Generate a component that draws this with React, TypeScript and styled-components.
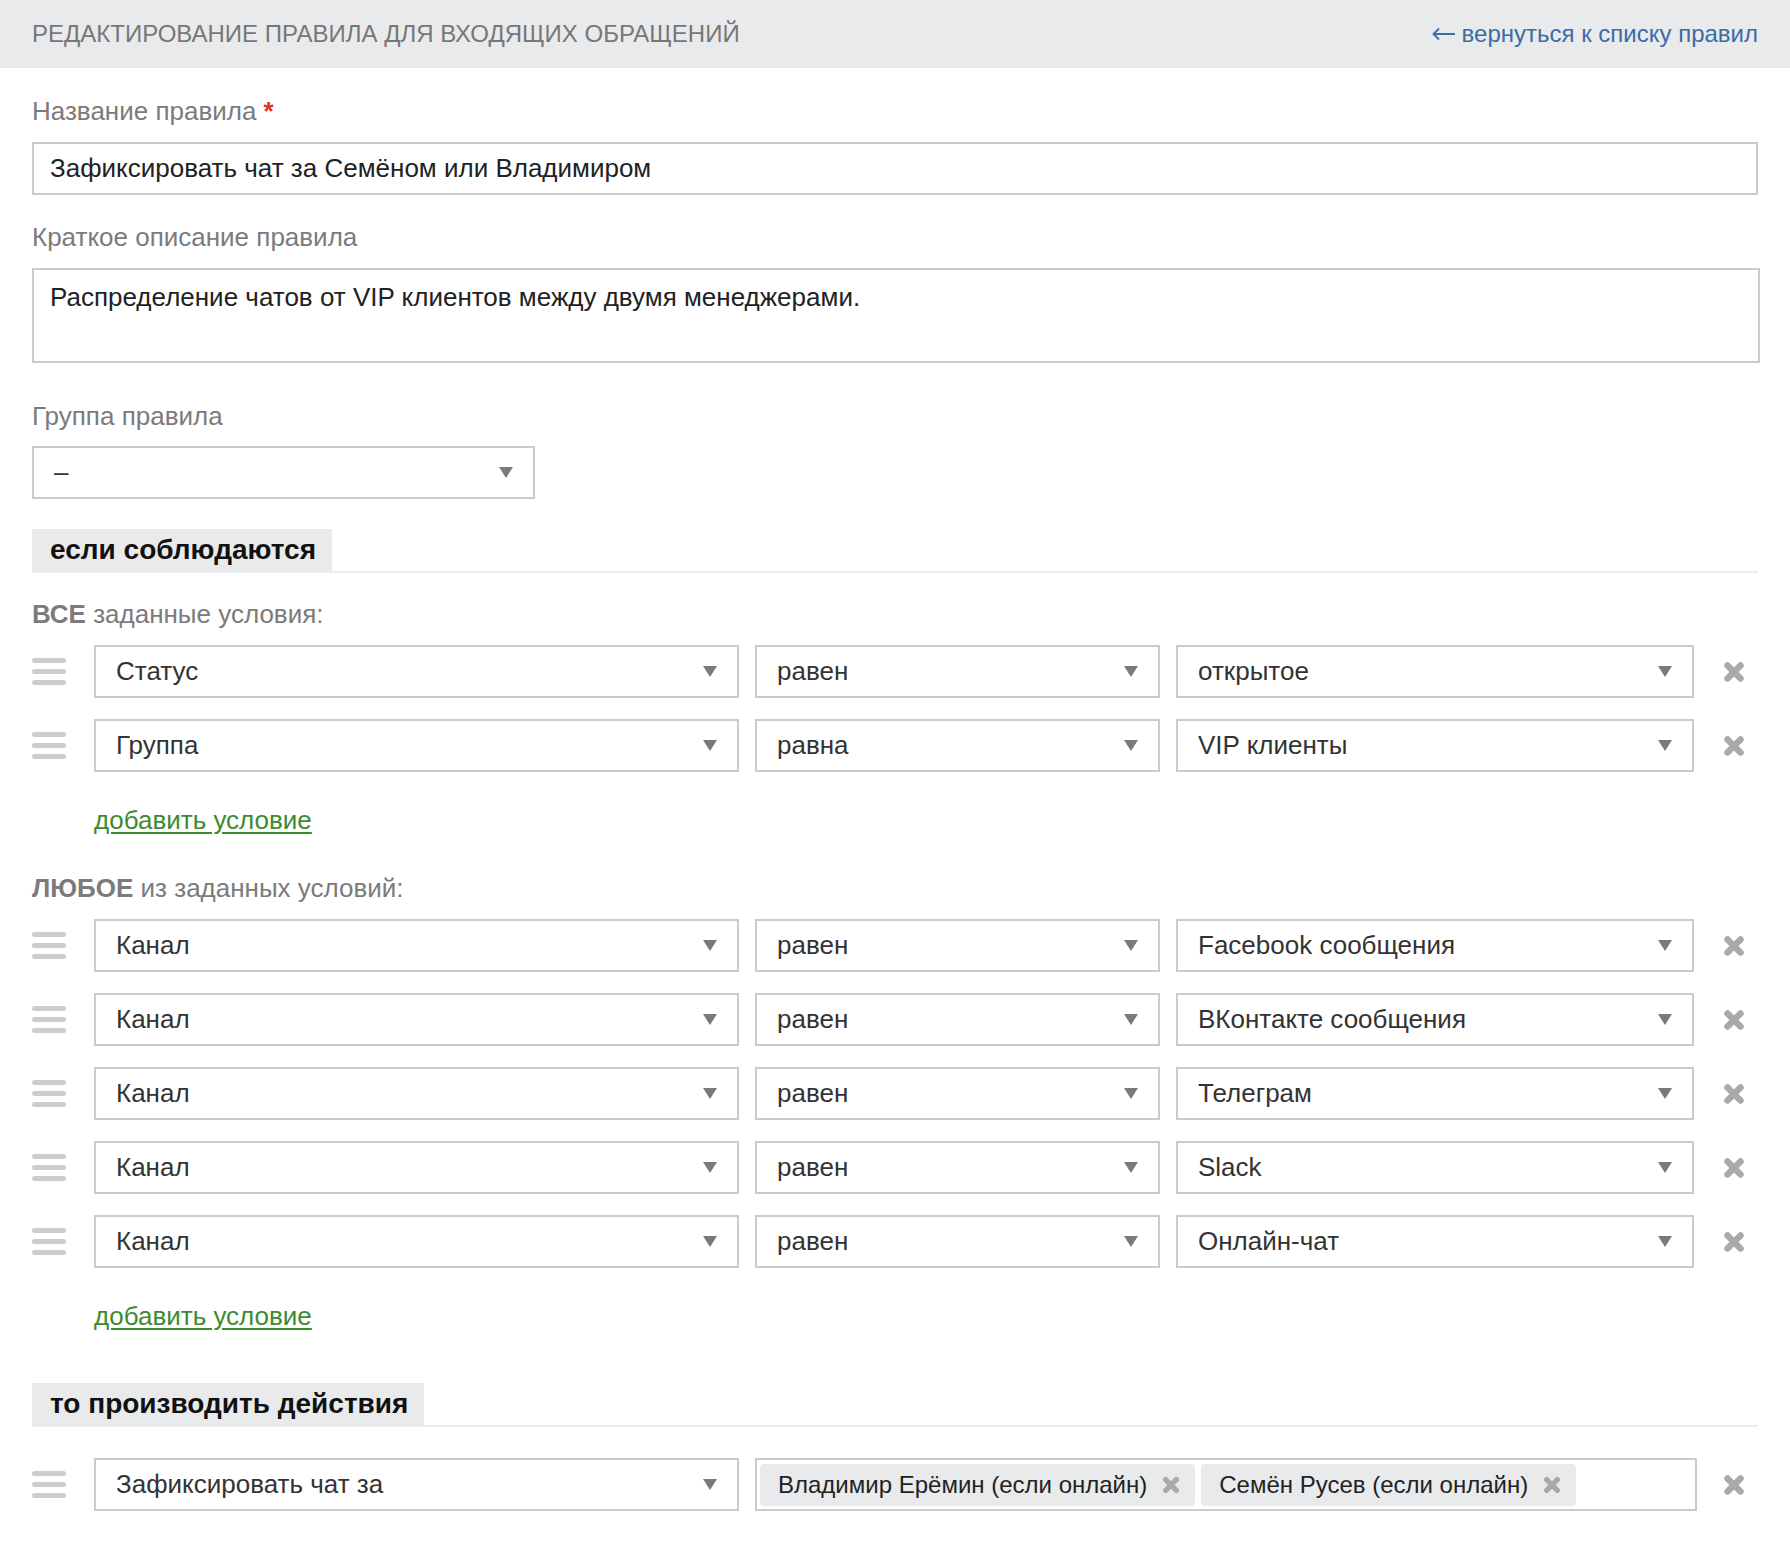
/***** IMPORTS *****/
import React from 'react';
import styled, { createGlobalStyle } from 'styled-components';


/***** STYLES *****/
const GlobalStyle = createGlobalStyle`
    html, body {
        margin: 0;
        padding: 0;
        background: #fff;
    }

    body {
        font-family: "Liberation Sans", Arial, Helvetica, sans-serif;
        color: #222;
    }
`;

const Header = styled.header`
    height: 68px;
    padding: 0 32px;
    background: #e9eaec;
    display: flex;
    align-items: center;
    justify-content: space-between;
`;

const HeaderTitle = styled.h1`
    margin: 0;
    font-size: 24px;
    font-weight: normal;
    color: #777;
    text-transform: uppercase;
`;

const BackLink = styled.a`
    display: flex;
    align-items: center;
    gap: 6px;
    font-size: 24px;
    color: #3b6ca5;
    text-decoration: none;
`;

const Page = styled.main`
    padding: 0 32px 35px;
    display: flex;
    flex-direction: column;
`;

const Label = styled.div<{ $top: number }>`
    margin-top: ${p => p.$top}px;
    margin-bottom: 16px;
    font-size: 26px;
    line-height: 30px;
    color: #7b7b7b;

    b {
        font-weight: bold;
    }
`;

const Required = styled.span`
    color: #e2321f;
    font-weight: bold;
`;

const TextInput = styled.input`
    box-sizing: border-box;
    width: 100%;
    height: 53px;
    padding: 0 16px;
    border: 2px solid #cbcbcb;
    font-family: inherit;
    font-size: 26px;
    color: #222;
    outline: none;
`;

const TextArea = styled.textarea`
    box-sizing: border-box;
    width: calc(100% + 2px);
    height: 95px;
    padding: 12px 16px;
    border: 2px solid #cbcbcb;
    font-family: inherit;
    font-size: 26px;
    line-height: 30px;
    color: #222;
    resize: none;
    outline: none;
`;

const Select = styled.div<{ $width?: number }>`
    box-sizing: border-box;
    width: ${p => (p.$width ? `${p.$width}px` : 'auto')};
    height: 53px;
    padding: 0 20px 0 20px;
    border: 2px solid #cbcbcb;
    background: #fff;
    display: flex;
    align-items: center;
    justify-content: space-between;
    font-size: 26px;
    color: #333;
    min-width: 0;
`;

const Arrow = styled.span`
    width: 0;
    height: 0;
    border-left: 7px solid transparent;
    border-right: 7px solid transparent;
    border-top: 11px solid #7a7a7a;
    flex-shrink: 0;
`;

const SectionHead = styled.div<{ $top: number }>`
    margin-top: ${p => p.$top}px;
    display: flex;
    border-bottom: 2px solid #ececee;
`;

const SectionTab = styled.div`
    height: 42px;
    padding: 0 16px 0 18px;
    background: #e9eaec;
    display: flex;
    align-items: center;
    font-size: 28px;
    font-weight: bold;
    color: #111;
`;

const Rows = styled.div`
    display: flex;
    flex-direction: column;
    gap: 21px;
`;

const Row = styled.div<{ $top?: number }>`
    margin-top: ${p => p.$top || 0}px;
    display: grid;
    grid-template-columns: 46px 645px 405px 518px 1fr;
    column-gap: 16px;
    align-items: center;
`;

const Handle = styled.div`
    width: 34px;
    display: flex;
    flex-direction: column;
    gap: 6px;

    span {
        display: block;
        height: 5px;
        border-radius: 3px;
        background: #cdcdcd;
    }
`;

const Remove = styled.div`
    display: flex;
    justify-content: center;
`;

const AddLink = styled.a<{ $top: number }>`
    align-self: flex-start;
    margin-top: ${p => p.$top}px;
    margin-left: 62px;
    font-size: 26px;
    line-height: 30px;
    color: #3d8b31;
    text-decoration: underline;
    text-underline-offset: 3px;
`;

const TagBox = styled.div`
    grid-column: span 2;
    box-sizing: border-box;
    width: calc(100% + 3px);
    height: 53px;
    padding: 0 3px;
    border: 2px solid #cbcbcb;
    display: flex;
    align-items: center;
    gap: 6px;
`;

const Tag = styled.div`
    height: 42px;
    padding: 0 15px 0 18px;
    border-radius: 4px;
    background: #e9eaec;
    display: flex;
    align-items: center;
    gap: 15px;
    font-size: 24px;
    color: #222;
    white-space: nowrap;
`;


/***** ICONS *****/
const Cross = ({ size }: { size: number }) => (
    <svg width={size} height={size} viewBox='0 0 22 22'>
        <path d='M4.5 4.5 L17.5 17.5 M17.5 4.5 L4.5 17.5' stroke='#a9a9a9' strokeWidth='6.5' strokeLinecap='round' />
    </svg>
);

const BackArrow = () => (
    <svg width='24' height='14' viewBox='0 0 24 14'>
        <path d='M1.5 7 H23 M7 1.5 L1.5 7 L7 12.5' stroke='#3b6ca5' strokeWidth='1.8' fill='none' />
    </svg>
);

const DragHandle = () => (
    <Handle><span /><span /><span /></Handle>
);


/***** COMPONENT-FUNCTION *****/
const App = () => {

    /*** Variables ***/
    const allConditions = [
        { field: 'Статус', op: 'равен', value: 'открытое' },
        { field: 'Группа', op: 'равна', value: 'VIP клиенты' },
    ];

    const anyConditions = [
        { field: 'Канал', op: 'равен', value: 'Facebook сообщения' },
        { field: 'Канал', op: 'равен', value: 'ВКонтакте сообщения' },
        { field: 'Канал', op: 'равен', value: 'Телеграм' },
        { field: 'Канал', op: 'равен', value: 'Slack' },
        { field: 'Канал', op: 'равен', value: 'Онлайн-чат' },
    ];

    const renderRow = (row: { field: string, op: string, value: string }, i: number) => (
        <Row key={i}>
            <DragHandle />
            <Select>{row.field}<Arrow /></Select>
            <Select>{row.op}<Arrow /></Select>
            <Select>{row.value}<Arrow /></Select>
            <Remove><Cross size={22} /></Remove>
        </Row>
    );


    /*** Return-statement ***/
    return (
        <>
            <GlobalStyle />
            <Header>
                <HeaderTitle>Редактирование правила для входящих обращений</HeaderTitle>
                <BackLink href='#'><BackArrow />вернуться к списку правил</BackLink>
            </Header>
            <Page>
                <Label $top={28}>Название правила <Required>*</Required></Label>
                <TextInput defaultValue='Зафиксировать чат за Семёном или Владимиром' />

                <Label $top={27}>Краткое описание правила</Label>
                <TextArea defaultValue='Распределение чатов от VIP клиентов между двумя менеджерами.' />

                <Label $top={38} style={{ marginBottom: 15 }}>Группа правила</Label>
                <Select $width={503}>–<Arrow /></Select>

                <SectionHead $top={30}><SectionTab>если соблюдаются</SectionTab></SectionHead>

                <Label $top={26}><b>ВСЕ</b> заданные условия:</Label>
                <Rows>{allConditions.map(renderRow)}</Rows>
                <AddLink href='#' $top={33}>добавить условие</AddLink>

                <Label $top={38}><b>ЛЮБОЕ</b> из заданных условий:</Label>
                <Rows>{anyConditions.map(renderRow)}</Rows>
                <AddLink href='#' $top={33}>добавить условие</AddLink>

                <SectionHead $top={52}><SectionTab>то производить действия</SectionTab></SectionHead>

                <Row $top={31}>
                    <DragHandle />
                    <Select>Зафиксировать чат за<Arrow /></Select>
                    <TagBox>
                        <Tag>Владимир Ерёмин (если онлайн) <Cross size={18} /></Tag>
                        <Tag>Семён Русев (если онлайн) <Cross size={18} /></Tag>
                    </TagBox>
                    <Remove><Cross size={22} /></Remove>
                </Row>
            </Page>
        </>
    );
}


/***** EXPORTS *****/
export default App;
